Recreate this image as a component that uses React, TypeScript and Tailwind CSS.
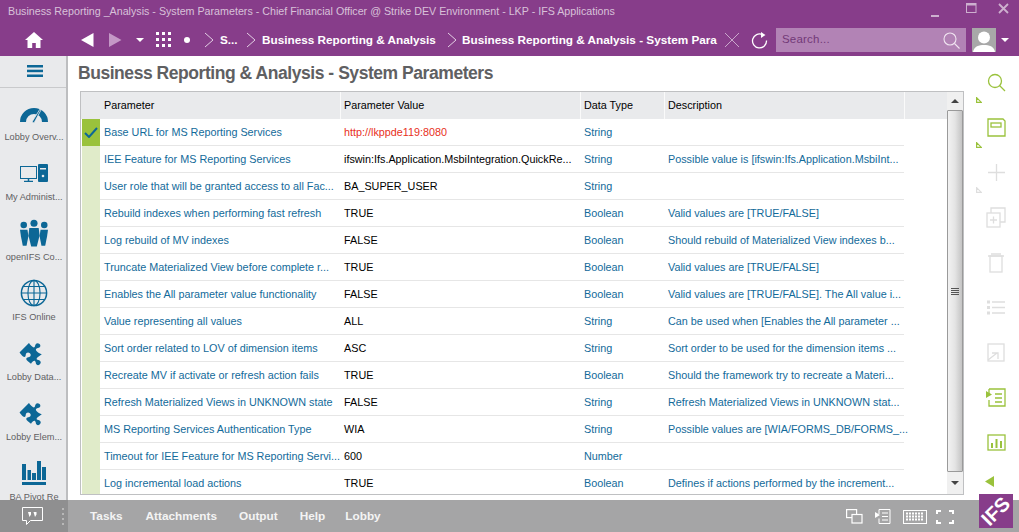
import { FaPuzzlePiece } from 'react-icons/fa'

const sans = "font-['Liberation_Sans',Arial,sans-serif]"

const rows = [
  ['Base URL for MS Reporting Services', 'http://lkppde119:8080', 'String', ''],
  ['IEE Feature for MS Reporting Services', 'ifswin:Ifs.Application.MsbiIntegration.QuickRe...', 'String', 'Possible value is [ifswin:Ifs.Application.MsbiInt...'],
  ['User role that will be granted access to all Fac...', 'BA_SUPER_USER', 'String', ''],
  ['Rebuild indexes when performing fast refresh', 'TRUE', 'Boolean', 'Valid values are [TRUE/FALSE]'],
  ['Log rebuild of MV indexes', 'FALSE', 'Boolean', 'Should rebuild of Materialized View indexes b...'],
  ['Truncate Materialized View before complete r...', 'TRUE', 'Boolean', 'Valid values are [TRUE/FALSE]'],
  ['Enables the All parameter value functionality', 'FALSE', 'Boolean', 'Valid values are [TRUE/FALSE]. The All value i...'],
  ['Value representing all values', 'ALL', 'String', 'Can be used when [Enables the All parameter ...'],
  ['Sort order related to LOV of dimension items', 'ASC', 'String', 'Sort order to be used for the dimension items ...'],
  ['Recreate MV if activate or refresh action fails', 'TRUE', 'Boolean', 'Should the framework try to recreate a Materi...'],
  ['Refresh Materialized Views in UNKNOWN state', 'FALSE', 'String', 'Refresh Materialized Views in UNKNOWN stat...'],
  ['MS Reporting Services Authentication Type', 'WIA', 'String', 'Possible values are [WIA/FORMS_DB/FORMS_...'],
  ['Timeout for IEE Feature for MS Reporting Servi...', '600', 'Number', ''],
  ['Log incremental load actions', 'TRUE', 'Boolean', 'Defines if actions performed by the increment...'],
]

function Chevron() {
  return (
    <svg width="10" height="16" viewBox="0 0 10 16" fill="none" stroke="#e3cfe4" strokeWidth="1" className="shrink-0">
      <path d="M1 1l8 7-8 7" />
    </svg>
  )
}

function TitleBar() {
  return (
    <div className="flex h-[24px] items-center bg-[#873d8a] pb-[2px] pl-2 text-[10.7px] text-[#d8c1d9]">
      <span className="whitespace-nowrap">Business Reporting _Analysis - System Parameters - Chief Financial Officer @ Strike DEV Environment - LKP - IFS Applications</span>
      <div className="ml-auto flex items-center">
        <svg width="10" height="10" viewBox="0 0 10 10" className="mr-[26px] mt-[4px]"><rect x="1" y="7" width="8" height="2" fill="#cdb0cf" /></svg>
        <svg width="11" height="11" viewBox="0 0 11 11" fill="none" stroke="#cdb0cf" className="mb-[6px] mr-[21px]"><rect x="0.5" y="0.5" width="9.5" height="9" /><path d="M0.5 1.5h9.5" strokeWidth="2" /></svg>
        <svg width="11" height="11" viewBox="0 0 11 11" fill="none" stroke="#cdb0cf" strokeWidth="1.8" className="mb-[6px] mr-[10px]"><path d="M1 1l9 9M10 1l-9 9" /></svg>
      </div>
    </div>
  )
}

function NavBar() {
  return (
    <div className="flex h-[32px] items-start bg-[#873d8a] pt-[4px]">
      <div className="flex h-[24px] w-[68px] shrink-0 items-center justify-center">
        <svg width="18" height="16" viewBox="0 0 18 16" fill="#fff"><path d="M9 0L0 8h2.500v8h4.700v-5h3.600v5h4.700V8H18z" /></svg>
      </div>
      <div className="flex h-[24px] items-center pl-[13px] text-[11.75px] font-bold text-white">
        <svg width="13" height="14" viewBox="0 0 13 14" fill="#fff" className="mr-[15px] shrink-0"><path d="M12.500 0v14L0 7z" /></svg>
        <svg width="13" height="14" viewBox="0 0 13 14" fill="#c498c6" className="mr-[14px] shrink-0"><path d="M0 0v14L12.500 7z" /></svg>
        <svg width="8" height="4" viewBox="0 0 8 4" fill="#fff" className="mr-[12px] shrink-0"><path d="M0 0h8L4 4z" /></svg>
        <svg width="16" height="16" viewBox="0 0 16 16" fill="#fff" className="mr-[12px] shrink-0">
          <rect x="0" y="0" width="3" height="3" /><rect x="6" y="0" width="3" height="3" /><rect x="12" y="0" width="3" height="3" />
          <rect x="0" y="6" width="3" height="3" /><rect x="6" y="6" width="3" height="3" /><rect x="12" y="6" width="3" height="3" />
          <rect x="0" y="12" width="3" height="3" /><rect x="6" y="12" width="3" height="3" /><rect x="12" y="12" width="3" height="3" />
        </svg>
        <span className="mr-[14px] size-[6px] shrink-0 rounded-full bg-white" />
        <Chevron />
        <span className="ml-[6px] w-[26px] shrink-0 whitespace-nowrap">S...</span>
        <Chevron />
        <span className="ml-[6px] w-[185px] shrink-0 whitespace-nowrap">Business Reporting &amp; Analysis</span>
        <Chevron />
        <span className="ml-[5px] w-[255px] shrink-0 whitespace-nowrap">Business Reporting &amp; Analysis - System Para</span>
        <svg width="16" height="16" viewBox="0 0 16 16" fill="none" stroke="#c9a8cb" className="ml-[7px] mr-[11px] shrink-0"><path d="M1 1l14 14M15 1L1 15" /></svg>
        <svg width="17" height="17" viewBox="0 0 17 17" fill="none" stroke="#fff" strokeWidth="1.300" className="shrink-0">
          <path d="M11.500 2.600A7 7 0 1 0 15.500 8.500" />
          <path d="M10 0l4.500 3L10 6z" fill="#fff" stroke="none" />
        </svg>
      </div>
      <div className="ml-[8px] flex h-[24px] w-[190px] shrink-0 items-center bg-[#b283b5] pl-[6px] pr-[6px] text-[11.5px] tracking-[0.2px] text-[#733a78]">
        <span>Search...</span>
        <svg width="17" height="17" viewBox="0 0 17 17" fill="none" stroke="#f0e4f0" strokeWidth="1.100" className="ml-auto">
          <circle cx="7" cy="7" r="6" /><path d="M11.500 11.500L16.500 16.500" />
        </svg>
      </div>
      <div className="ml-[6px] h-[24px] w-[24px] shrink-0 overflow-hidden bg-[#a8a8a8]">
        <svg width="24" height="24" viewBox="0 0 24 24" fill="#fff"><circle cx="12" cy="9.500" r="6" /><path d="M1 24c1-6 6-7 11-7s10 1 11 7z" /></svg>
      </div>
      <svg width="8" height="4" viewBox="0 0 8 4" fill="#fff" className="ml-[5px] mt-[10px] shrink-0"><path d="M0 0h8L4 4z" /></svg>
    </div>
  )
}

const blue = '#0c6796'

function Puzzle() {
  return <FaPuzzlePiece size={23} color={blue} className="rotate-45" />
}

const sideItems = [
  {
    label: 'Lobby Overv...',
    icon: (
      <svg width="28" height="19" viewBox="0 0 28 19">
        <path d="M0 18A14 14 0 0 1 28 18h-6A8 8 0 0 0 6 18z" fill={blue} />
        <path d="M12 18l8-13 1 1-7 13z" fill={blue} stroke="#e9eaec" strokeWidth="0.800" />
      </svg>
    ),
  },
  {
    label: 'My Administ...',
    icon: (
      <svg width="28" height="18" viewBox="0 0 28 18" fill="none">
        <rect x="0.500" y="2.500" width="16" height="12" stroke={blue} />
        <path d="M4 17.500h9M8.500 15v3" stroke={blue} strokeWidth="1.500" />
        <rect x="18" y="0" width="10" height="18" rx="1" fill={blue} />
        <rect x="20" y="4" width="6" height="1.500" fill="#e9eaec" />
        <circle cx="23" cy="12" r="1.300" fill="#e9eaec" />
      </svg>
    ),
  },
  {
    label: 'openIFS Co...',
    icon: (
      <svg width="28" height="29" viewBox="0 0 30 30" fill={blue}>
        <circle cx="4" cy="6" r="3.500" /><circle cx="15" cy="4" r="3.800" /><circle cx="26" cy="6" r="3.500" />
        <path d="M0 11h8l1 7-2 10H3L1 18z" /><path d="M10 9h10l1 8-3 12h-6L9 17z" /><path d="M22 11h8l-1 7-2 10h-4l-2-10z" />
      </svg>
    ),
  },
  {
    label: 'IFS Online',
    icon: (
      <svg width="28" height="28" viewBox="0 0 30 30" fill="none" stroke={blue}>
        <circle cx="15" cy="15" r="13.500" strokeWidth="1.600" />
        <ellipse cx="15" cy="15" rx="6.500" ry="13.500" strokeWidth="1.200" />
        <path d="M15 1.500v27M1.500 15h27M3.500 8h23M3.500 22h23" strokeWidth="1.200" />
      </svg>
    ),
  },
  { label: 'Lobby Data...', icon: <Puzzle /> },
  { label: 'Lobby Elem...', icon: <Puzzle /> },
  {
    label: 'BA Pivot Re',
    icon: (
      <svg width="24" height="24" viewBox="0 0 24 24" fill={blue}>
        <rect x="0" y="3" width="4" height="16" /><rect x="5.500" y="9" width="3.500" height="10" /><rect x="10" y="12" width="4" height="7" /><rect x="15" y="0" width="4" height="19" /><rect x="20" y="6" width="4" height="13" /><rect x="0" y="21" width="24" height="3" />
      </svg>
    ),
  },
]

function LeftBar() {
  return (
    <div className="flex w-[68px] shrink-0 flex-col overflow-hidden border-r-2 border-[#bdbec0] bg-[#e9eaec]">
      <div className="flex h-[32px] shrink-0 items-center justify-center border-b border-[#c9cacc] pb-[2px] pl-[3px]">
        <svg width="16" height="12" viewBox="0 0 16 12" fill={blue}><rect width="16" height="2.500" /><rect y="4.700" width="16" height="2.500" /><rect y="9.500" width="16" height="2.500" /></svg>
      </div>
      <div className="flex flex-col pl-[2px] pt-[9px]">
        {sideItems.map(it => (
          <div key={it.label} className="flex h-[60px] shrink-0 flex-col items-center">
            <div className="flex h-[32px] items-center justify-center">{it.icon}</div>
            <div className="mt-[1px] whitespace-nowrap text-center text-[9.2px] leading-[14px] text-[#5f6062]">{it.label}</div>
          </div>
        ))}
      </div>
    </div>
  )
}

function Scrollbar() {
  return (
    <div className="flex w-[16px] shrink-0 flex-col bg-[#f0f0f0]">
      <div className="flex h-[18px] shrink-0 items-center justify-center">
        <svg width="8" height="4" viewBox="0 0 8 4" fill="#444"><path d="M4 0l4 4H0z" /></svg>
      </div>
      <div className="flex h-[362px] shrink-0 items-center justify-center rounded-[1px] border border-[#9a9a9a] bg-gradient-to-r from-[#f2f2f2] via-[#e4e4e4] to-[#c4c4c4]">
        <svg width="8" height="7" viewBox="0 0 8 7" fill="#555"><rect width="8" height="1" /><rect y="2" width="8" height="1" /><rect y="4" width="8" height="1" /><rect y="6" width="8" height="1" /></svg>
      </div>
      <div className="flex flex-1 items-center justify-center">
        <svg width="8" height="4" viewBox="0 0 8 4" fill="#444"><path d="M0 0h8L4 4z" /></svg>
      </div>
    </div>
  )
}

function ParamTable() {
  return (
    <div className="flex h-[404px] w-[884px] overflow-hidden border border-[#bfc0c2]">
      <div className="flex min-w-0 flex-1 flex-col overflow-hidden">
        <div className="flex h-[27px] shrink-0 items-stretch bg-[#e9eaec] text-[10.8px] text-black">
          <div className="w-[20px] shrink-0" />
          {[['Parameter', 'w-[240px]'], ['Parameter Value', 'w-[240px]'], ['Data Type', 'w-[84px]'], ['Description', 'w-[240px]']].map(([t, w]) => (
            <div key={t} className={w + ' flex shrink-0 items-center border-r border-[#fafafa] pb-[1px] pl-[3px]'}>{t}</div>
          ))}
        </div>
        <div className="flex flex-col overflow-hidden">
          {rows.map((r, i) => (
            <div key={r[0]} className="flex h-[27px] shrink-0 items-stretch text-[10.8px]">
              <div className={(i === 0 ? 'bg-[#9ac23c]' : 'bg-[#e0ebc9]') + ' ml-[1px] flex w-[18px] shrink-0 items-center justify-center'}>
                {i === 0 && (
                  <svg width="14" height="11" viewBox="0 0 14 11" fill="none" stroke={blue} strokeWidth="2"><path d="M1 6l4 4 8-9" /></svg>
                )}
              </div>
              <div className="flex w-[804px] shrink-0 border-b border-[#e6e6e6]">
                <div className="flex w-[240px] shrink-0 items-center whitespace-nowrap pl-[4px] text-[#126a9a]">{r[0]}</div>
                <div className={(i === 0 ? 'text-[#e8301c]' : 'text-black') + ' flex w-[240px] shrink-0 items-center whitespace-nowrap pl-[4px]'}>{r[1]}</div>
                <div className="flex w-[84px] shrink-0 items-center pl-[4px] text-[#126a9a]">{r[2]}</div>
                <div className="flex w-[240px] shrink-0 items-center whitespace-nowrap pl-[4px] text-[#126a9a]">{r[3]}</div>
              </div>
            </div>
          ))}
        </div>
      </div>
      <Scrollbar />
    </div>
  )
}

const g = '#9ac23c'
const l = '#dedede'

const railItems = [
  { mark: g, icon: <svg width="19" height="19" viewBox="0 0 19 19" fill="none" stroke={g} strokeWidth="1.300"><circle cx="8" cy="8" r="6.500" /><path d="M12.500 12.500L18 18" /></svg> },
  { mark: g, icon: <svg width="19" height="19" viewBox="0 0 19 19" fill="none" stroke={g} strokeWidth="1.300"><path d="M1 1h15l2 2v15H1z" /><rect x="4" y="5" width="10" height="4" /></svg> },
  { mark: l, icon: <svg width="19" height="19" viewBox="0 0 19 19" fill="none" stroke={l} strokeWidth="1.300"><path d="M9.500 1v17M1 9.500h17" /></svg> },
  { icon: <svg width="20" height="21" viewBox="0 0 20 21" fill="none" stroke={l} strokeWidth="1.300"><rect x="1" y="6" width="13" height="14" /><path d="M5 6V1h14v14h-5M4 13h7M7.500 9.500v7" /></svg> },
  { icon: <svg width="16" height="20" viewBox="0 0 16 20" fill="none" stroke={l} strokeWidth="1.300"><rect x="2" y="3" width="12" height="16" /><path d="M0 3h16M3 1h10" /></svg> },
  { icon: <svg width="18" height="15" viewBox="0 0 18 15" fill="none" stroke={l} strokeWidth="1.300"><path d="M5 2h13M5 7.500h13M5 13h13" /><rect x="0" y="0.500" width="3" height="3" fill={l} stroke="none" /><rect x="0" y="6" width="3" height="3" fill={l} stroke="none" /><rect x="0" y="11.500" width="3" height="3" fill={l} stroke="none" /></svg> },
  { icon: <svg width="18" height="19" viewBox="0 0 18 19" fill="none" stroke={l} strokeWidth="1.300"><rect x="1" y="1" width="16" height="17" /><path d="M1 17l9-7M5 10h6v6" /></svg> },
  { icon: <svg width="20" height="19" viewBox="0 0 20 19" fill="none" stroke={g} strokeWidth="1.300"><path d="M3 1h16v17H3v-6M3 7V1M9 6h7M9 10h7M9 14h7" /><path d="M0 3l6 3.500L0 10z" fill={g} stroke="none" /></svg> },
  { icon: <svg width="19" height="17" viewBox="0 0 19 17" fill="none" stroke={g} strokeWidth="1.300"><rect x="1" y="1" width="17" height="15" /><path d="M5 9v5M9.500 5v9M14 7v7" strokeWidth="2" /></svg> },
]

function RightRail() {
  return (
    <div className="flex w-[54px] shrink-0 flex-col items-center pt-[4px]">
      {railItems.map((it, i) => (
        <div key={i} className="relative flex h-[45px] w-full shrink-0 items-center justify-center pl-[8px]">
          {it.icon}
          {it.mark && (
            <svg width="6" height="6" viewBox="0 0 6 6" fill="none" stroke={it.mark} strokeWidth="1.200" className="absolute left-[11px] top-[37px]"><path d="M0.600 0.600L5.400 5.400H0.600z" /></svg>
          )}
        </div>
      ))}
      <div className="flex h-[32px] w-full items-center pl-[20px]">
        <svg width="9" height="11" viewBox="0 0 9 11" fill={g}><path d="M9 0v11L0 5.500z" /></svg>
      </div>
    </div>
  )
}

function BottomBar() {
  return (
    <div className="relative flex h-[32px] shrink-0 items-center bg-[#a5a5a6] text-[11.8px] font-bold text-[#f4f4f4]">
      <div className="flex h-full w-[68px] shrink-0 items-center bg-[#8f8f90] pl-[22px]">
        <svg width="21" height="18" viewBox="0 0 21 18" fill="none" stroke="#fff"><path d="M0.500 0.500h20v13h-12l-4 4v-4h-4z" /><path d="M6 5h3v2.500L7.500 10M11.500 5h3v2.500L13 10" fill="#fff" stroke="none" /></svg>
      </div>
      <div className="absolute left-[62px] top-[8px] flex flex-col gap-[3px]">
        {[0, 1, 2, 3].map(n => <span key={n} className="size-[2px] bg-[#b8b8b8]" />)}
      </div>
      <div className="ml-[22px] flex items-center pt-[1px]">
        <span>Tasks</span>
        <span className="ml-[23px]">Attachments</span>
        <span className="ml-[22px]">Output</span>
        <span className="ml-[22px]">Help</span>
        <span className="ml-[20px]">Lobby</span>
      </div>
      <div className="ml-auto mr-[65px] flex items-center pt-[1px]">
        <svg width="17" height="15" viewBox="0 0 17 15" fill="none" stroke="#fff" strokeWidth="1.200"><rect x="0.600" y="0.600" width="10" height="8" /><rect x="6" y="5.500" width="10" height="8.500" fill="#a5a5a6" /></svg>
        <svg width="16" height="15" viewBox="0 0 16 15" fill="none" stroke="#fff" className="ml-[12px]"><path d="M4 0.500h11v14H4v-5M4 5V0.500M7 4h6M7 7.500h6M7 11h6" /><path d="M0 3l5 3-5 3z" fill="#fff" stroke="none" /></svg>
        <svg width="24" height="14" viewBox="0 0 24 14" fill="none" stroke="#fff" className="ml-[12px]"><rect x="0.500" y="0.500" width="23" height="13" /><path d="M3 3.500h18M3 6.500h18M3 9.500h18" strokeDasharray="2 1" strokeWidth="2" /></svg>
        <svg width="18" height="14" viewBox="0 0 18 14" fill="none" stroke="#fff" strokeWidth="2" className="ml-[9px]"><path d="M5 1H1v3M13 1h4v3M5 13H1v-3M13 13h4v-3" /></svg>
      </div>
      <div className="absolute right-[6px] top-[-6px] flex h-[34px] w-[34px] items-center justify-center bg-[#873d8a]">
        <span className="-rotate-45 text-[20px] font-bold leading-none text-white">IFS</span>
      </div>
    </div>
  )
}

export default function App() {
  return (
    <div className={sans + ' flex h-screen w-full flex-col overflow-hidden bg-white'}>
      <TitleBar />
      <NavBar />
      <div className="flex min-h-0 flex-1">
        <LeftBar />
        <div className="flex min-w-0 flex-1 flex-col pl-[12px]">
          <div className="-ml-[2px] flex h-[35px] shrink-0 items-center whitespace-nowrap text-[17.5px] font-bold tracking-[-0.45px] text-[#5f6062]">Business Reporting &amp; Analysis - System Parameters</div>
          <ParamTable />
        </div>
        <RightRail />
      </div>
      <BottomBar />
    </div>
  )
}
